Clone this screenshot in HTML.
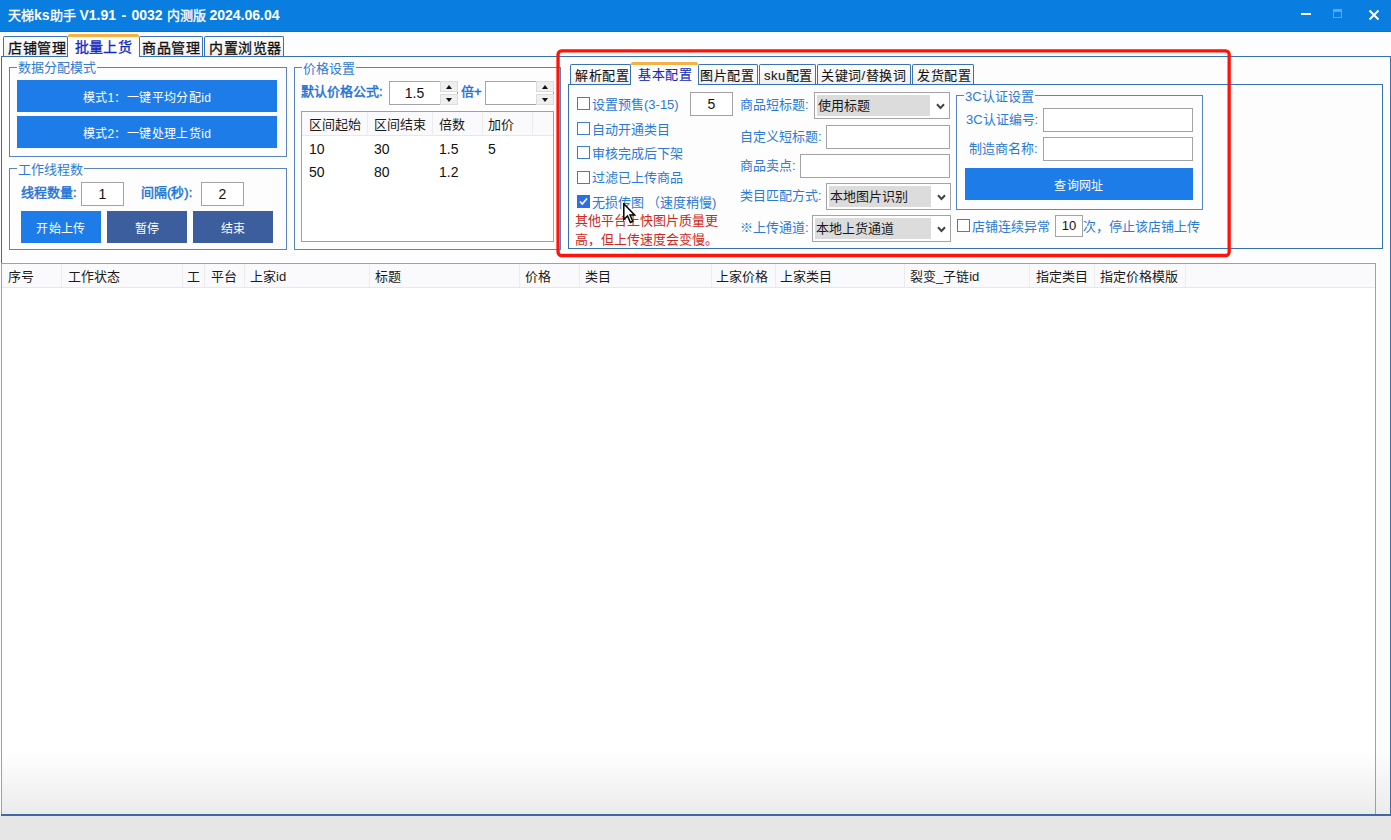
<!DOCTYPE html>
<html lang="zh-CN"><head><meta charset="utf-8">
<style>
*{box-sizing:border-box;margin:0;padding:0}
html,body{width:1391px;height:840px;overflow:hidden;background:#fdfdfe;font-family:"Liberation Sans",sans-serif;color:#222}
.a{position:absolute}
.t{position:absolute;white-space:nowrap;font-size:13px;line-height:18px}
#title{left:0;top:0;width:1391px;height:32px;background:#0a7de0;border-bottom:1px solid #1c6cc0}
#title .tx{left:8px;top:6px;color:#fff;font-weight:bold;font-size:14px;line-height:18px}
.tab{position:absolute;border:1px solid #3a72b8;border-bottom:none;border-radius:2px 2px 0 0;background:linear-gradient(#fefefe,#f0f0f0)}
.tab.sel{background:#fdfdfe;border:none;border-top:3px solid #f4b244;border-radius:2px 2px 0 0}
.page{position:absolute;border:1px solid #3570b5}
.grp{position:absolute;border:1px solid #5a85bc}
.gt{position:absolute;background:#fdfdfe;color:#2f7ad2;font-size:13px;line-height:16px;padding:0 1px 0 1px}
.btn{position:absolute;background:#1e7ce8;color:#fff;font-size:12px;letter-spacing:.4px;text-align:center;padding-top:2px}
.btn.dk{background:#3c5e9e}
.tb{position:absolute;background:#fff;border:1px solid #a3a3a3}
.lbl{color:#2b7ad6}
.blb{color:#1f74d6;font-weight:normal;-webkit-text-stroke:.45px currentColor}
.cb{position:absolute;width:13px;height:13px;border:1px solid #3f7fc8;background:#fff}
.hd{position:absolute;top:0;height:24px;border-right:1px solid #e8e8e8}
.spin{width:18px;height:24px}
.spin .su,.spin .sd{position:absolute;left:0;width:18px;height:11px;background:#efefef;border:1px solid #dcdcdc}
.spin .su{top:0}.spin .sd{top:13px}
.spin .su:after{content:"";position:absolute;left:5px;top:3px;border-left:3.5px solid transparent;border-right:3.5px solid transparent;border-bottom:4px solid #111}
.spin .sd:after{content:"";position:absolute;left:5px;top:3px;border-left:3.5px solid transparent;border-right:3.5px solid transparent;border-top:4px solid #111}
.num{font-size:14px;color:#111}
.itab{font-size:13px;letter-spacing:.5px;color:#151515;-webkit-text-stroke:.1px currentColor}
.cmb{position:absolute;height:27px;background:#fff;border:1px solid #a3a3a3}
.cmb .cg{position:absolute;left:2px;top:2px;height:21px;background:#dcdcdc}
.cmb .ct{position:absolute;left:3px;top:4px;font-size:13px;line-height:18px;color:#1a1a1a;white-space:nowrap}
.cmb .chev{position:absolute;right:4px;top:10px}
.mt{font-size:14px;letter-spacing:.6px;line-height:18px;color:#111;-webkit-text-stroke:.3px currentColor}
.hdt{color:#1a1a1a}
.cj{font-weight:normal;font-size:13px;-webkit-text-stroke:.35px currentColor}
</style></head><body>
<!-- title bar -->
<div id="title" class="a">
  <div class="t tx"><span class="cj">天梯</span>ks<span class="cj">助手</span> V1.91<span style="padding:0 1.5px"> - </span>0032 <span class="cj">内测版</span> 2024.06.04</div>
  <div class="a" style="left:1301px;top:13px;width:10px;height:2px;background:#fff"></div>
  <div class="a" style="left:1333px;top:9px;width:9px;height:9px;border:1px solid #5aa8f4;border-top-width:3px"></div>
  <svg class="a" style="left:1368px;top:9px" width="12" height="12"><path d="M1.5 1.5L10.5 10.5M10.5 1.5L1.5 10.5" stroke="#fff" stroke-width="2"/></svg>
</div>

<!-- bottom gradient -->
<div class="a" style="left:1px;top:750px;width:1390px;height:65px;background:linear-gradient(#fdfdfe,#ebebeb)"></div>
<div class="a" style="left:0;top:815px;width:1391px;height:25px;background:#e6e6e6"></div>
<!-- main tab page -->
<div class="page" style="left:1px;top:56px;width:1390px;height:760px;border-color:#3570b5;border-bottom:2px solid #3c6aa6"></div>
<div class="tab" style="left:3px;top:36px;width:65px;height:20px"></div>
<div class="tab sel" style="left:68px;top:34px;width:71px;height:23px"></div>
<div class="tab" style="left:139px;top:36px;width:64px;height:20px"></div>
<div class="tab" style="left:204px;top:36px;width:80px;height:20px"></div>
<div class="t mt" style="left:8px;top:39px">店铺管理</div>
<div class="t mt" style="left:75px;top:38px;color:#1228c2;letter-spacing:.2px">批量上货</div>
<div class="t mt" style="left:142px;top:39px">商品管理</div>
<div class="t mt" style="left:209px;top:39px">内置浏览器</div>

<!-- group 数据分配模式 -->
<div class="grp" style="left:9px;top:67px;width:278px;height:90px"></div>
<div class="gt" style="left:17px;top:60px">数据分配模式</div>
<div class="btn" style="left:17px;top:80px;width:260px;height:32px;line-height:32px">模式1：一键平均分配id</div>
<div class="btn" style="left:17px;top:116px;width:260px;height:32px;line-height:32px">模式2：一键处理上货id</div>

<!-- group 工作线程数 -->
<div class="grp" style="left:9px;top:168px;width:278px;height:82px"></div>
<div class="gt" style="left:17px;top:161px;padding-top:1px">工作线程数</div>
<div class="t blb" style="left:21px;top:184px">线程数量:</div>
<div class="tb" style="left:81px;top:182px;width:43px;height:24px"></div>
<div class="t" style="left:81px;top:185px;width:43px;text-align:center;font-size:14px;color:#111">1</div>
<div class="t blb" style="left:141px;top:184px">间隔(秒):</div>
<div class="tb" style="left:201px;top:182px;width:43px;height:24px"></div>
<div class="t" style="left:201px;top:185px;width:43px;text-align:center;font-size:14px;color:#111">2</div>
<div class="btn" style="left:21px;top:211px;width:80px;height:32px;line-height:32px">开始上传</div>
<div class="btn dk" style="left:107px;top:211px;width:80px;height:32px;line-height:32px">暂停</div>
<div class="btn dk" style="left:193px;top:211px;width:80px;height:32px;line-height:32px">结束</div>

<!-- group 价格设置 -->
<div class="grp" style="left:294px;top:67px;width:267px;height:183px"></div>
<div class="gt" style="left:302px;top:60px;padding-top:1px">价格设置</div>
<div class="t blb" style="left:301px;top:83px">默认价格公式:</div>
<div class="tb" style="left:389px;top:81px;width:69px;height:24px"></div>
<div class="t" style="left:389px;top:84px;width:51px;text-align:center;font-size:14px;color:#111">1.5</div>
<div class="t blb" style="left:461px;top:83px">倍+</div>
<div class="tb" style="left:485px;top:81px;width:69px;height:24px"></div>

<!-- spinners -->
<div class="a spin" style="left:440px;top:81px"><div class="su"></div><div class="sd"></div></div>
<div class="a spin" style="left:536px;top:81px"><div class="su"></div><div class="sd"></div></div>

<!-- datagrid price -->
<div class="a" style="left:301px;top:111px;width:253px;height:131px;border:1px solid #a0a0a0;background:#fff">
  <div class="a" style="left:0;top:0;width:251px;height:24px;background:#fafafc;border-bottom:1px solid #e8e8e8"></div>
  <div class="a" style="left:65px;top:0;width:1px;height:24px;background:#ececec"></div>
  <div class="a" style="left:130px;top:0;width:1px;height:24px;background:#ececec"></div>
  <div class="a" style="left:180px;top:0;width:1px;height:24px;background:#ececec"></div>
  <div class="a" style="left:230px;top:0;width:1px;height:24px;background:#ececec"></div>
  <div class="t" style="left:7px;top:4px;color:#1a1a1a">区间起始</div>
  <div class="t" style="left:72px;top:4px;color:#1a1a1a">区间结束</div>
  <div class="t" style="left:137px;top:4px;color:#1a1a1a">倍数</div>
  <div class="t" style="left:186px;top:4px;color:#1a1a1a">加价</div>
  <div class="t num" style="left:7px;top:28px">10</div>
  <div class="t num" style="left:72px;top:28px">30</div>
  <div class="t num" style="left:137px;top:28px">1.5</div>
  <div class="t num" style="left:186px;top:28px">5</div>
  <div class="t num" style="left:7px;top:51px">50</div>
  <div class="t num" style="left:72px;top:51px">80</div>
  <div class="t num" style="left:137px;top:51px">1.2</div>
</div>

<!-- inner tab control -->
<div class="page" style="left:568px;top:84px;width:815px;height:165px;border-color:#3570b5"></div>
<div class="tab" style="left:570px;top:64px;width:61px;height:20px"></div>
<div class="tab sel" style="left:631px;top:62px;width:67px;height:23px"></div>
<div class="tab" style="left:698px;top:64px;width:60px;height:20px"></div>
<div class="tab" style="left:759px;top:64px;width:57px;height:20px"></div>
<div class="tab" style="left:817px;top:64px;width:94px;height:20px"></div>
<div class="tab" style="left:912px;top:64px;width:62px;height:20px"></div>
<div class="t itab" style="left:575px;top:67px">解析配置</div>
<div class="t itab" style="left:638px;top:66px;color:#1228c2">基本配置</div>
<div class="t itab" style="left:700px;top:67px">图片配置</div>
<div class="t itab" style="left:764px;top:67px">sku配置</div>
<div class="t itab" style="left:821px;top:67px">关键词/替换词</div>
<div class="t itab" style="left:917px;top:67px">发货配置</div>

<!-- checkboxes col -->
<div class="cb" style="left:577px;top:97px"></div>
<div class="t lbl" style="left:592px;top:96px">设置预售(3-15)</div>
<div class="tb" style="left:690px;top:92px;width:43px;height:24px"></div>
<div class="t num" style="left:690px;top:95px;width:43px;text-align:center">5</div>
<div class="cb" style="left:577px;top:122px"></div>
<div class="t lbl" style="left:592px;top:121px">自动开通类目</div>
<div class="cb" style="left:577px;top:146px"></div>
<div class="t lbl" style="left:592px;top:145px">审核完成后下架</div>
<div class="cb" style="left:577px;top:171px"></div>
<div class="t lbl" style="left:592px;top:169px">过滤已上传商品</div>
<div class="cb chk" style="left:577px;top:195px"><svg width="13" height="13" style="position:absolute;left:-1px;top:-1px"><rect x="0" y="0" width="13" height="13" fill="#2f6ee6"/><path d="M3 6.5L5.3 9L10 3.5" stroke="#fff" stroke-width="1.6" fill="none"/></svg></div>
<div class="t lbl" style="left:592px;top:194px">无损传图<span style="margin-left:3px">（</span>速度稍慢)</div>
<div class="t" style="left:575px;top:211px;color:#cc2a20;line-height:19px;white-space:normal;width:150px">其他平台上快图片质量更高，但上传速度会变慢。</div>

<!-- middle col -->
<div class="t lbl" style="left:740px;top:96px">商品短标题:</div>
<div class="cmb" style="left:814px;top:92px;width:136px"><div class="cg" style="width:113px"></div><div class="ct">使用标题</div><svg class="chev" width="9" height="7"><path d="M1 1.2L4.5 5L8 1.2" stroke="#444" stroke-width="2" fill="none"/></svg></div>
<div class="t lbl" style="left:740px;top:128px">自定义短标题:</div>
<div class="tb" style="left:826px;top:125px;width:124px;height:24px"></div>
<div class="t lbl" style="left:740px;top:157px">商品卖点:</div>
<div class="tb" style="left:800px;top:154px;width:150px;height:24px"></div>
<div class="t lbl" style="left:740px;top:187px">类目匹配方式:</div>
<div class="cmb" style="left:826px;top:183px;width:125px"><div class="cg" style="width:102px"></div><div class="ct">本地图片识别</div><svg class="chev" width="9" height="7"><path d="M1 1.2L4.5 5L8 1.2" stroke="#444" stroke-width="2" fill="none"/></svg></div>
<div class="t lbl" style="left:740px;top:219px">※上传通道:</div>
<div class="cmb" style="left:812px;top:215px;width:139px"><div class="cg" style="width:116px"></div><div class="ct">本地上货通道</div><svg class="chev" width="9" height="7"><path d="M1 1.2L4.5 5L8 1.2" stroke="#444" stroke-width="2" fill="none"/></svg></div>

<!-- 3C group -->
<div class="grp" style="left:956px;top:95px;width:247px;height:115px"></div>
<div class="gt" style="left:964px;top:88px;padding-top:1px">3C认证设置</div>
<div class="t lbl" style="left:966px;top:111px">3C认证编号:</div>
<div class="tb" style="left:1043px;top:108px;width:150px;height:24px"></div>
<div class="t lbl" style="left:969px;top:140px">制造商名称:</div>
<div class="tb" style="left:1043px;top:137px;width:150px;height:24px"></div>
<div class="btn" style="left:965px;top:168px;width:228px;height:32px;line-height:32px">查询网址</div>
<div class="cb" style="left:957px;top:219px"></div>
<div class="t lbl" style="left:972px;top:218px">店铺连续异常</div>
<div class="tb" style="left:1055px;top:215px;width:28px;height:22px"></div>
<div class="t num" style="left:1055px;top:217px;width:28px;text-align:center;font-size:13px">10</div>
<div class="t lbl" style="left:1083px;top:218px">次，停止该店铺上传</div>

<!-- main datagrid -->
<div class="a" style="left:1px;top:263px;width:1375px;height:551px;border:1px solid #a0a0a0;border-bottom:none;background:linear-gradient(#fff 0,#fff 487px,#ebebeb 551px)"></div>
<div class="a" style="left:2px;top:264px;width:1373px;height:24px;background:#fafafc;border-bottom:1px solid #e8e8e8"></div>
<div class="a" style="left:61px;top:264px;width:1px;height:23px;background:#ececec"></div>
<div class="a" style="left:182px;top:264px;width:1px;height:23px;background:#ececec"></div>
<div class="a" style="left:204px;top:264px;width:1px;height:23px;background:#ececec"></div>
<div class="a" style="left:244px;top:264px;width:1px;height:23px;background:#ececec"></div>
<div class="a" style="left:369px;top:264px;width:1px;height:23px;background:#ececec"></div>
<div class="a" style="left:519px;top:264px;width:1px;height:23px;background:#ececec"></div>
<div class="a" style="left:579px;top:264px;width:1px;height:23px;background:#ececec"></div>
<div class="a" style="left:711px;top:264px;width:1px;height:23px;background:#ececec"></div>
<div class="a" style="left:775px;top:264px;width:1px;height:23px;background:#ececec"></div>
<div class="a" style="left:904px;top:264px;width:1px;height:23px;background:#ececec"></div>
<div class="a" style="left:1029px;top:264px;width:1px;height:23px;background:#ececec"></div>
<div class="a" style="left:1094px;top:264px;width:1px;height:23px;background:#ececec"></div>
<div class="a" style="left:1185px;top:264px;width:1px;height:23px;background:#ececec"></div>
<div class="t hdt" style="left:8px;top:268px">序号</div>
<div class="t hdt" style="left:68px;top:268px">工作状态</div>
<div class="t hdt" style="left:187px;top:268px">工</div>
<div class="t hdt" style="left:211px;top:268px">平台</div>
<div class="t hdt" style="left:250px;top:268px">上家id</div>
<div class="t hdt" style="left:375px;top:268px">标题</div>
<div class="t hdt" style="left:525px;top:268px">价格</div>
<div class="t hdt" style="left:585px;top:268px">类目</div>
<div class="t hdt" style="left:716px;top:268px">上家价格</div>
<div class="t hdt" style="left:780px;top:268px">上家类目</div>
<div class="t hdt" style="left:910px;top:268px">裂变_子链id</div>
<div class="t hdt" style="left:1036px;top:268px">指定类目</div>
<div class="t hdt" style="left:1100px;top:268px">指定价格模版</div>


<!-- red highlight -->
<svg class="a" style="left:550px;top:40px" width="700" height="230"><rect x="8.05" y="10.85" width="671.1" height="204.65" rx="3.5" fill="none" stroke="#ff1208" stroke-width="3.3"/></svg>
<!-- cursor -->
<svg class="a" style="left:623px;top:203px" width="14" height="22"><path d="M0.8 0.8L0.8 16.5L4.5 13L7.4 19.4L9.8 18.3L7 12L11.6 12Z" fill="#fff" stroke="#000" stroke-width="1.5" stroke-linejoin="miter"/></svg>
</body></html>
